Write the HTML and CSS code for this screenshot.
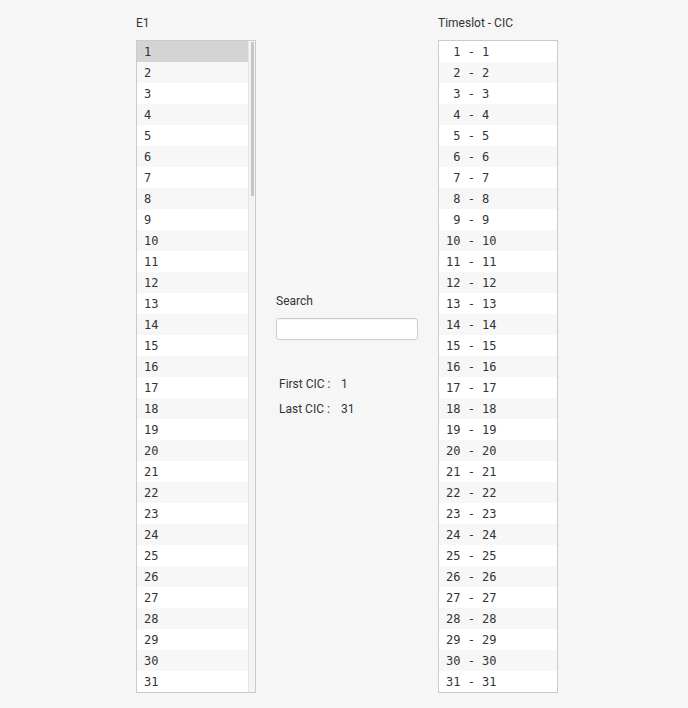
FILE: index.html
```html
<!DOCTYPE html>
<html>
<head>
<meta charset="utf-8">
<link rel="stylesheet" href="styles.css">
</head>
<body>
<div class="page">
  <div class="col">
    <div class="label">E1</div>
    <div class="list list-scroll">
      <ul class="items">
        <li class="sel">1</li><li>2</li><li>3</li><li>4</li><li>5</li><li>6</li><li>7</li><li>8</li><li>9</li><li>10</li>
        <li>11</li><li>12</li><li>13</li><li>14</li><li>15</li><li>16</li><li>17</li><li>18</li><li>19</li><li>20</li>
        <li>21</li><li>22</li><li>23</li><li>24</li><li>25</li><li>26</li><li>27</li><li>28</li><li>29</li><li>30</li>
        <li>31</li>
      </ul>
      <div class="scrollbar"><div class="thumb"></div></div>
    </div>
  </div>

  <div class="mid">
    <div class="label">Search</div>
    <input class="search" type="text">
    <div class="info">
      <span>First CIC :</span><span>1</span>
      <span>Last CIC :</span><span>31</span>
    </div>
  </div>

  <div class="col">
    <div class="label">Timeslot - CIC</div>
    <div class="list">
      <ul class="items">
        <li> 1 - 1</li><li> 2 - 2</li><li> 3 - 3</li><li> 4 - 4</li><li> 5 - 5</li>
        <li> 6 - 6</li><li> 7 - 7</li><li> 8 - 8</li><li> 9 - 9</li><li>10 - 10</li>
        <li>11 - 11</li><li>12 - 12</li><li>13 - 13</li><li>14 - 14</li><li>15 - 15</li>
        <li>16 - 16</li><li>17 - 17</li><li>18 - 18</li><li>19 - 19</li><li>20 - 20</li>
        <li>21 - 21</li><li>22 - 22</li><li>23 - 23</li><li>24 - 24</li><li>25 - 25</li>
        <li>26 - 26</li><li>27 - 27</li><li>28 - 28</li><li>29 - 29</li><li>30 - 30</li>
        <li>31 - 31</li>
      </ul>
    </div>
  </div>
</div>
</body>
</html>
```

FILE: styles.css
```css
html, body {
  margin: 0;
  padding: 0;
  background: #f6f6f6;
}

body {
  font-family: Roboto, "Liberation Sans", sans-serif;
  font-size: 12px;
  color: #333;
}

.page {
  display: flex;
  gap: 20px;
  padding: 15px 0 0 136px;
}

.col {
  display: flex;
  flex-direction: column;
  width: 120px;
}

.label {
  line-height: 16px;
  height: 16px;
  margin-bottom: 9px;
  white-space: nowrap;
}

.list {
  display: flex;
  box-sizing: border-box;
  width: 120px;
  height: 653px;
  border: 1px solid #cbcbcb;
  background: #fff;
  overflow: hidden;
}

.items {
  list-style: none;
  margin: 0;
  padding: 0;
  flex: 1;
  min-width: 0;
}

.items li {
  box-sizing: border-box;
  height: 21px;
  padding-top: 2px;
  line-height: 19px;
  padding-left: 7px;
  font-family: "DejaVu Sans Mono", "Liberation Mono", monospace;
  font-size: 12px;
  color: #333;
  white-space: pre;
  background: #fff;
}

.items li:nth-child(even) {
  background: #f7f7f7;
}

.items li.sel {
  background: #d4d4d4;
}

.scrollbar {
  box-sizing: border-box;
  width: 7px;
  flex: none;
  background: #f3f3f3;
  border-left: 1px solid #e6e6e6;
  padding: 1px 1px 0 2px;
}

.thumb {
  height: 154px;
  background: #c6c6c6;
  border-radius: 1px;
}

.mid {
  display: flex;
  flex-direction: column;
  width: 142px;
  padding-top: 278px;
}

.search {
  box-sizing: border-box;
  width: 142px;
  height: 22px;
  margin: 0;
  padding: 0 6px;
  border: 1px solid #cccccc;
  border-radius: 3px;
  background: #fff;
  box-shadow: inset 0 1px 1px rgba(0, 0, 0, 0.05);
  outline: none;
}

.info {
  display: grid;
  grid-template-columns: 62px auto;
  row-gap: 9px;
  margin-top: 36px;
  padding-left: 3px;
  line-height: 16px;
}
```
